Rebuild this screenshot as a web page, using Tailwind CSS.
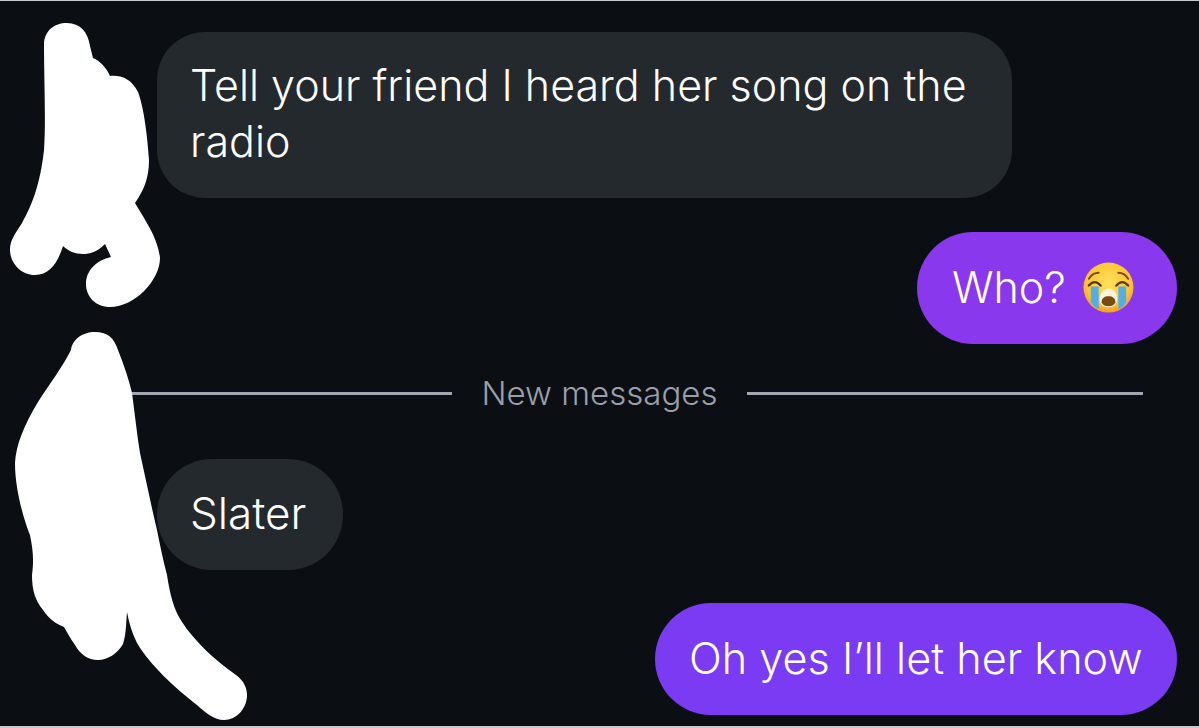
<!doctype html>
<html>
<head>
<meta charset="utf-8">
<script src="https://cdn.jsdelivr.net/npm/@tailwindcss/browser@4"></script>
</head>
<body class="m-0 bg-[#0b0f14]">
<main class="relative w-[1199px] h-[728px] overflow-hidden bg-[#0b0f14] border-t border-b-2 border-[#c9cacc] font-['Inter','Roboto',sans-serif] text-white flex flex-col pt-[31px]">
  <div class="pl-[157px]">
    <p class="w-[855px] h-[166px] rounded-[48px] bg-[#24292d] pl-[33px] pt-[25px] text-[43px] leading-[56px] font-[350]">Tell your friend I heard her song on the radio</p>
  </div>
  <div class="flex justify-end pr-[22px] mt-[34px]">
    <div class="h-[112px] w-[260px] rounded-[56px] bg-[#8a38ee] pl-[35px] pb-[2px] flex items-center gap-[16px] text-[43px] font-[350]">
      <span>Who?</span>
      <svg class="w-[53px] h-[53px] shrink-0 mt-[2px]" viewBox="0 0 54 54" aria-label="crying emoji">
        <defs>
          <radialGradient id="f" cx="50%" cy="40%" r="62%"><stop offset="0" stop-color="#ffe05a"/><stop offset="0.7" stop-color="#fdc534"/><stop offset="1" stop-color="#f39a1f"/></radialGradient>
        </defs>
        <circle cx="27" cy="26" r="25.5" fill="url(#f)"/>
        <path d="M9 25 L17 25 L17 48 Q12 46 9 41 Z" fill="#53aee8"/>
        <path d="M37 25 L45 25 L45 41 Q42 46 37 48 Z" fill="#53aee8"/>
        <path d="M7 17 Q11 11 17 11" fill="none" stroke="#7a4a10" stroke-width="2" stroke-linecap="round"/>
        <path d="M47 17 Q43 11 37 11" fill="none" stroke="#7a4a10" stroke-width="2" stroke-linecap="round"/>
        <path d="M7 24 Q13 17 19 24" fill="none" stroke="#5a3608" stroke-width="2.4" stroke-linecap="round"/>
        <path d="M35 24 Q41 17 47 24" fill="none" stroke="#5a3608" stroke-width="2.4" stroke-linecap="round"/>
        <path d="M27 27 C32 27 36 32 36 38 C36 44 32 46 27 46 C22 46 18 44 18 38 C18 32 22 27 27 27 Z" fill="#fff3d6"/>
        <path d="M27 35 C31 35 34 37 34 41 C33 44 31 45 27 45 C23 45 21 44 20 41 C20 37 23 35 27 35 Z" fill="#7a4a12"/>
      </svg>
    </div>
  </div>
  <div class="flex items-center pl-[132px] pr-[56px] mt-[29px] h-[40px]">
    <div class="h-[3px] w-[320px] bg-[#a3a6b2]"></div>
    <span class="mx-auto text-[#9a9fab] text-[33px] leading-[40px] font-[350] whitespace-nowrap">New messages</span>
    <div class="h-[3px] w-[396px] bg-[#a3a6b2]"></div>
  </div>
  <div class="pl-[157px] mt-[46px]">
    <div class="inline-flex items-center h-[111px] w-[186px] rounded-[55px] bg-[#24292d] pl-[33px] pb-[3px] text-[44px] font-[350]">Slater</div>
  </div>
  <div class="flex justify-end pr-[22px] mt-[33px]">
    <div class="flex items-center h-[112px] w-[522px] rounded-[56px] bg-[#7a3bf2] pl-[34px] pb-[2px] text-[43.2px] font-[350] whitespace-nowrap">Oh yes I’ll let her know</div>
  </div>
  <svg class="absolute left-0 top-[-1px] w-[1199px] h-[728px] pointer-events-none" viewBox="0 0 1199 728" aria-hidden="true">
    <path fill="#fff" d="M44 45 C44 31 54 23 67 23 C80 23 88 32 90 46 L93 58 C100 61 106 67 110 76 C120 75 131 78 138 92 C143 105 147 130 149 160 C149 178 144 190 135 203 C145 220 158 238 160 258 C160 280 135 307 110 307 C96 307 86 297 86 284 C86 270 97 260 111 257 L105 244 C97 252 90 254 83 254 C75 254 68 251 63 246 C58 262 50 275 35 275 C20 275 10 262 10 250 C10 240 15 234 22 223 C32 205 40 185 44 150 C46 120 44 80 44 45 Z"/>
    <path fill="#fff" d="M71 350 C72 340 82 332 95 332 C108 332 114 338 118 350 C124 365 129 380 132 393 C135 415 137 435 140 453 C146 480 151 505 157 530 C160 545 163 560 167 575 C170 595 174 610 182 622 C195 642 215 660 236 675 C244 681 247 688 247 695 C247 708 237 720 224 720 C214 720 206 713 197 705 C175 688 150 665 137 643 C132 633 129 623 127 612 C126 625 126 635 123 644 C118 653 108 660 98 660 C88 660 80 654 75 645 C70 638 67 632 64 627 C56 624 49 619 43 610 C35 600 32 590 32 575 C34 560 33 550 30 535 C24 520 15 490 15 463 C16 445 24 425 38 402 C50 383 62 368 71 350 Z"/>
  </svg>
</main>
</body>
</html>
